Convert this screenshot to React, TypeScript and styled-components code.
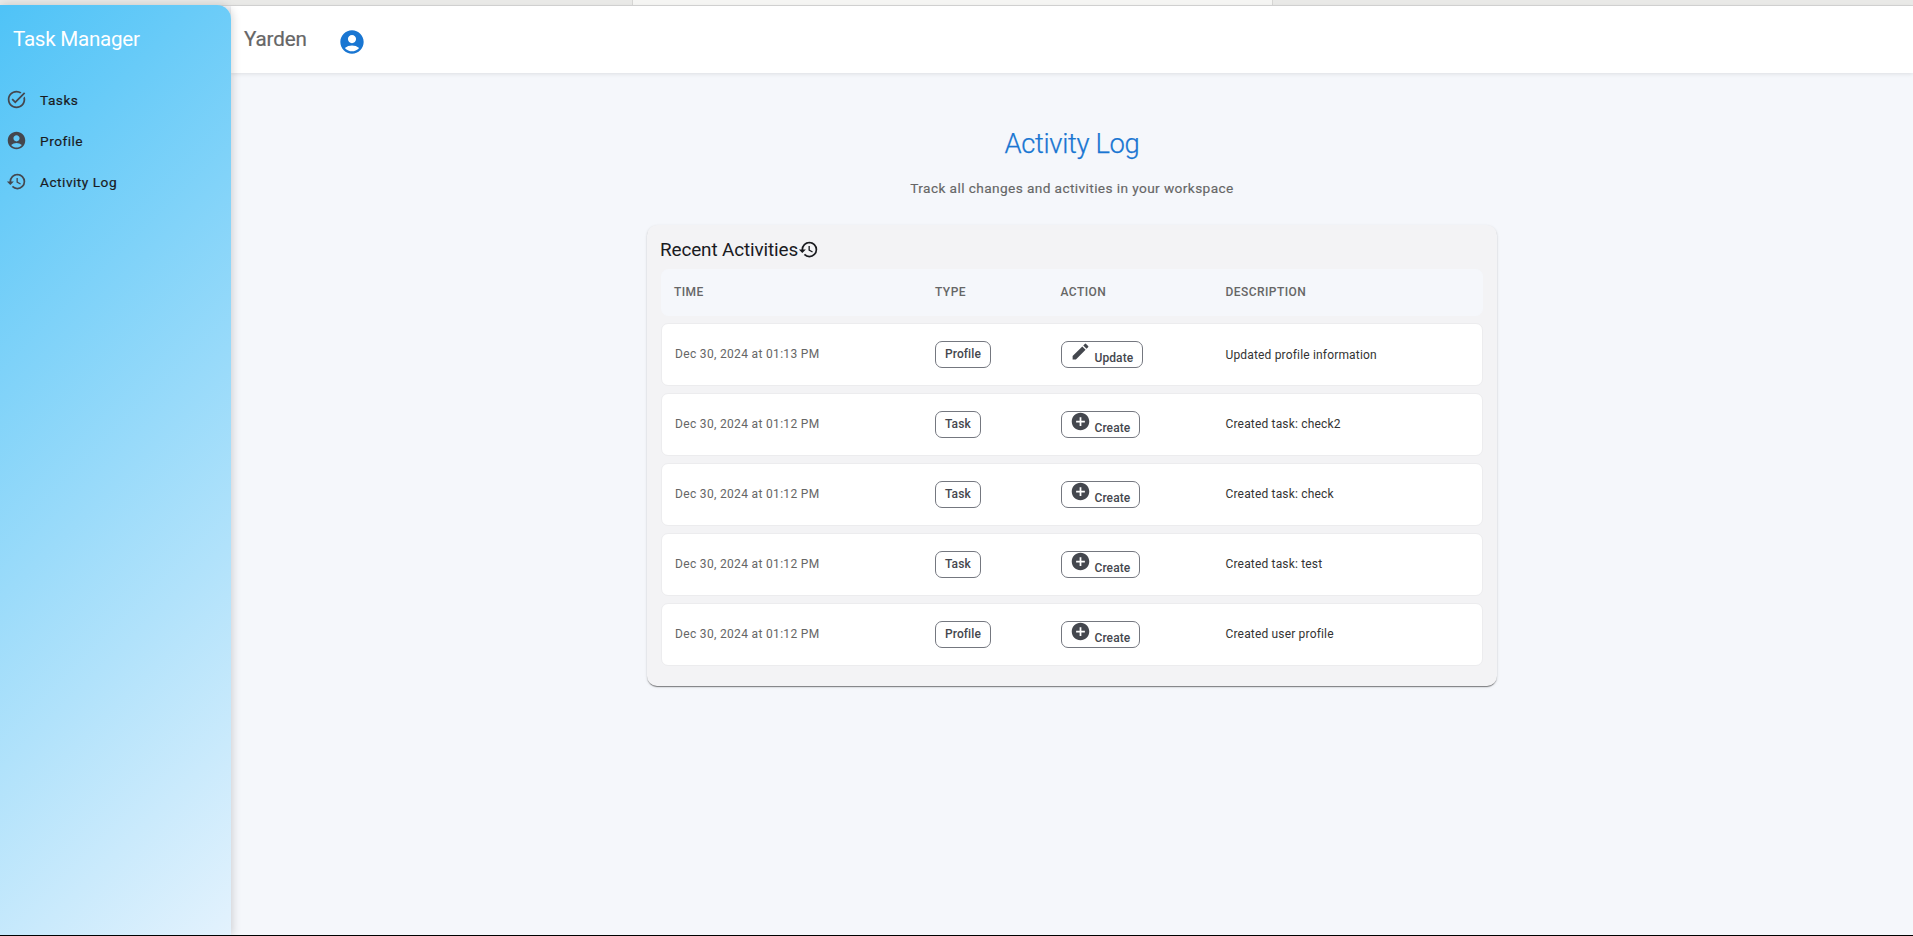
import React from 'react';
import styled, { createGlobalStyle } from 'styled-components';
import { MdTaskAlt, MdAccountCircle, MdHistory, MdEdit, MdAddCircle } from 'react-icons/md';

const GlobalStyle = createGlobalStyle`
  * { box-sizing: border-box; }
  body {
    margin: 0;
    background: #f5f7fb;
    font-family: Roboto, "Liberation Sans", sans-serif;
    overflow: hidden;
  }
`;

const Page = styled.div`
  display: flex;
  flex-direction: column;
  height: 936px;
  border-bottom: 1px solid #000;
`;

const TabStrip = styled.div`
  display: flex;
  flex: none;
  justify-content: center;
  height: 6px;
  padding-right: 8px;
  background: #e9e9e7;
  border-bottom: 1px solid #d6d6d6;
`;

const ActiveTab = styled.div`
  width: 641px;
  height: 5px;
  background: #f5f5f3;
  border: solid #d6d6d4;
  border-width: 0 1px;
`;

const Shell = styled.div`
  display: flex;
  flex: 1;
  min-height: 0;
  margin-top: -1px;
`;

const Sidebar = styled.nav`
  position: relative;
  z-index: 2;
  width: 231px;
  flex: none;
  border-top-right-radius: 14px;
  background: linear-gradient(135deg, #4fc3f7, #e3f2fd);
  box-shadow: 2px 0 9px rgba(0, 0, 0, 0.15);
`;

const Brand = styled.h1`
  margin: 0;
  height: 74px;
  padding: 21px 0 0 13px;
  color: #fff;
  font-size: 20.6px;
  line-height: 26px;
  font-weight: 400;
  letter-spacing: -0.25px;
`;

const NavItem = styled.a`
  display: flex;
  align-items: center;
  height: 41px;
  padding-left: 6px;
  gap: 13px;
  color: #1a1b1f;
  font-size: 13.7px;
  font-weight: 400;
  letter-spacing: 0.5px;
  -webkit-text-stroke: 0.2px #1a1b1f;
  svg { width: 21px; height: 21px; color: #44474e; }
`;

const Main = styled.main`
  flex: 1;
`;

const Toolbar = styled.header`
  display: flex;
  align-items: flex-start;
  height: 67px;
  padding: 21px 0 0 13px;
  margin-top: 1px;
  gap: 31px;
  background: #fff;
  box-shadow: 0 1px 4px rgba(0, 0, 0, 0.1);
  color: #666;
  font-size: 20.6px;
  line-height: 25px;
  letter-spacing: -0.15px;
  -webkit-text-stroke: 0.2px #666;
  svg { width: 28px; height: 28px; margin-top: 1px; color: #1976d2; stroke: none; }
`;

const Content = styled.section`
  width: 850px;
  margin: 0 auto;
  padding-top: 53px;
  position: relative;
  text-align: center;
`;

const Heading = styled.h2`
  margin: 0;
  color: #1976d2;
  font-size: 27.4px;
  line-height: 36px;
  font-weight: 300;
  letter-spacing: -0.35px;
  -webkit-text-stroke: 0.25px #1976d2;
`;

const Subtitle = styled.p`
  margin: 16px 0 27px;
  color: #666;
  font-size: 13.7px;
  line-height: 20px;
  letter-spacing: 0.39px;
  -webkit-text-stroke: 0.15px #666;
`;

const Card = styled.div`
  height: 461px;
  padding: 14px 14px 0;
  border-radius: 10px;
  background: #f3f3f5;
  text-align: left;
  box-shadow: 0 2px 1px -1px rgba(0, 0, 0, 0.3), 0 1px 1px rgba(0, 0, 0, 0.2), 0 1px 3px rgba(0, 0, 0, 0.12);
`;

const CardTitle = styled.h3`
  display: flex;
  align-items: center;
  margin: 0 0 0 -1px;
  height: 20px;
  color: #1a1b1f;
  font-size: 18.9px;
  font-weight: 400;
  letter-spacing: -0.12px;
  svg { width: 21px; height: 21px; }
`;

const Row = styled.div`
  display: grid;
  grid-template-columns: 260px 125.5px 165px 1fr;
  align-items: center;
  height: 63px;
  margin-bottom: 7px;
  padding-left: 13px;
  border: 1px solid #ececee;
  border-radius: 7px;
  background: #fff;
`;

const HeadRow = styled(Row)`
  height: 47px;
  margin-top: 10px;
  padding: 0 0 2px 12px;
  grid-template-columns: 261px 125.5px 165px 1fr;
  border-color: #f5f7fb;
  background: #f5f7fb;
  color: #666;
  font-size: 12px;
  font-weight: 500;
  letter-spacing: 0.45px;
`;

const Cell = styled.span<{ $dark?: boolean; $lower?: boolean }>`
  padding-bottom: ${(p) => (p.$lower ? '0' : '2px')};
  color: ${(p) => (p.$dark ? '#333' : '#666')};
  font-size: 12px;
  letter-spacing: ${(p) => (p.$dark ? '0.17px' : '0.33px')};
`;

const Chip = styled.span<{ $withIcon?: boolean }>`
  display: inline-flex;
  align-items: center;
  justify-self: start;
  height: 27px;
  padding: ${(p) => (p.$withIcon ? '6px 9px 0 8px' : '0 9px 2px')};
  border: 1px solid #74777f;
  border-radius: 7px;
  color: #44474e;
  font-size: 12px;
  line-height: 16px;
  font-weight: 500;
  letter-spacing: 0.08px;
  svg { width: 21px; height: 21px; margin: -12px 4px 0 0; }
`;

const navItems = [
  { label: 'Tasks', Icon: MdTaskAlt },
  { label: 'Profile', Icon: MdAccountCircle },
  { label: 'Activity Log', Icon: MdHistory },
];

const activities = [
  { time: 'Dec 30, 2024 at 01:13 PM', type: 'Profile', action: 'Update', text: 'Updated profile information' },
  { time: 'Dec 30, 2024 at 01:12 PM', type: 'Task', action: 'Create', text: 'Created task: check2' },
  { time: 'Dec 30, 2024 at 01:12 PM', type: 'Task', action: 'Create', text: 'Created task: check' },
  { time: 'Dec 30, 2024 at 01:12 PM', type: 'Task', action: 'Create', text: 'Created task: test' },
  { time: 'Dec 30, 2024 at 01:12 PM', type: 'Profile', action: 'Create', text: 'Created user profile' },
];

export default function App() {
  return (
    <Page>
      <GlobalStyle />
      <TabStrip><ActiveTab /></TabStrip>
      <Shell>
        <Sidebar>
          <Brand>Task Manager</Brand>
          {navItems.map(({ label, Icon }) => (
            <NavItem key={label}><Icon />{label}</NavItem>
          ))}
        </Sidebar>
        <Main>
          <Toolbar>Yarden<MdAccountCircle /></Toolbar>
          <Content>
            <Heading>Activity Log</Heading>
            <Subtitle>Track all changes and activities in your workspace</Subtitle>
            <Card>
              <CardTitle>Recent Activities<MdHistory /></CardTitle>
              <HeadRow>
                <span>TIME</span><span>TYPE</span><span>ACTION</span><span>DESCRIPTION</span>
              </HeadRow>
              {activities.map((a, i) => (
                <Row key={i}>
                  <Cell>{a.time}</Cell>
                  <Chip>{a.type}</Chip>
                  <Chip $withIcon>
                    {a.action === 'Update' ? <MdEdit /> : <MdAddCircle />}
                    {a.action}
                  </Chip>
                  <Cell $dark $lower={a.action === 'Update'}>{a.text}</Cell>
                </Row>
              ))}
            </Card>
          </Content>
        </Main>
      </Shell>
    </Page>
  );
}
